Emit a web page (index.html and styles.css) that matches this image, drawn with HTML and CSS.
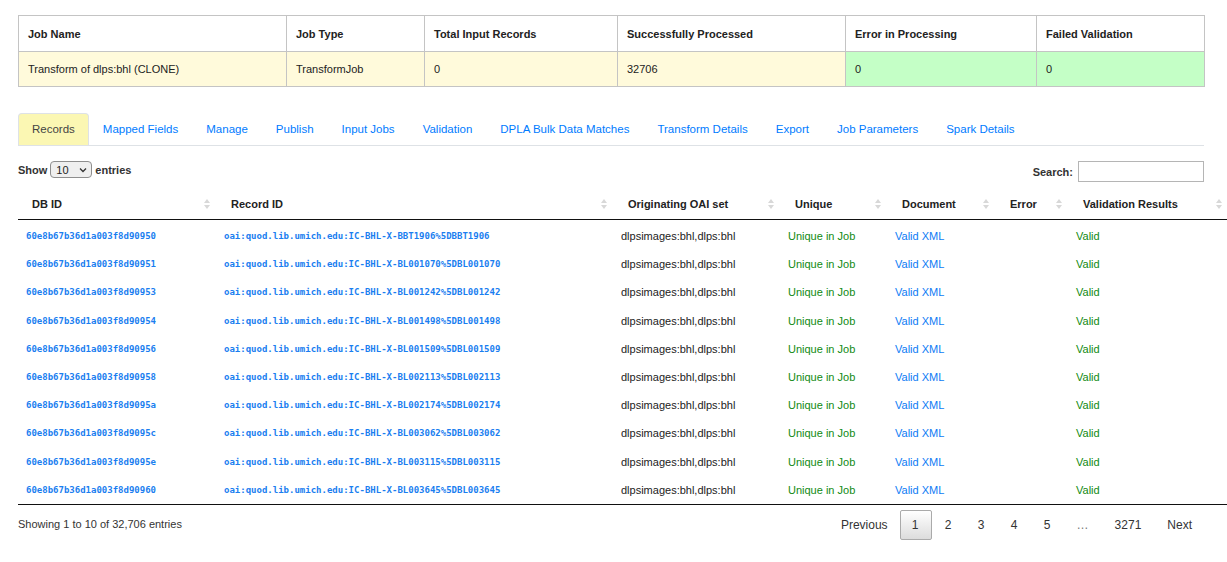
FILE: index.html
```html
<!DOCTYPE html>
<html>
<head>
<meta charset="utf-8">
<link rel="stylesheet" href="styles.css">
</head>
<body>
<div class="page">
  <table class="summary">
    <colgroup>
      <col style="width:268px"><col style="width:138px"><col style="width:193px"><col style="width:228px"><col style="width:191px"><col style="width:168px">
    </colgroup>
    <tr class="sum-head">
      <th>Job Name</th><th>Job Type</th><th>Total Input Records</th><th>Successfully Processed</th><th>Error in Processing</th><th>Failed Validation</th>
    </tr>
    <tr class="sum-data">
      <td class="warn">Transform of dlps:bhl (CLONE)</td><td class="warn">TransformJob</td><td class="warn">0</td><td class="warn">32706</td><td class="ok">0</td><td class="ok">0</td>
    </tr>
  </table>

  <ul class="tabs">
    <li class="tab active">Records</li>
    <li class="tab">Mapped Fields</li>
    <li class="tab">Manage</li>
    <li class="tab">Publish</li>
    <li class="tab">Input Jobs</li>
    <li class="tab">Validation</li>
    <li class="tab">DPLA Bulk Data Matches</li>
    <li class="tab">Transform Details</li>
    <li class="tab">Export</li>
    <li class="tab">Job Parameters</li>
    <li class="tab">Spark Details</li>
  </ul>

  <div class="dt-wrap">
    <div class="dt-top">
      <label class="len">Show <span class="sel">10<svg width="8" height="6" viewBox="0 0 8 6"><path d="M1 1.5 L4 4.5 L7 1.5" fill="none" stroke="#333" stroke-width="1.3"/></svg></span> entries</label>
      <label class="search">Search: <span class="inp"></span></label>
    </div>

    <table class="records">
      <colgroup>
        <col style="width:199px"><col style="width:397px"><col style="width:167px"><col style="width:107px"><col style="width:108px"><col style="width:73px"><col style="width:160px">
      </colgroup>
      <thead>
        <tr>
          <th><div class="th">DB ID<i class="sort"></i></div></th>
          <th><div class="th">Record ID<i class="sort"></i></div></th>
          <th><div class="th">Originating OAI set<i class="sort"></i></div></th>
          <th><div class="th">Unique<i class="sort"></i></div></th>
          <th><div class="th">Document<i class="sort"></i></div></th>
          <th><div class="th">Error<i class="sort"></i></div></th>
          <th><div class="th">Validation Results<i class="sort"></i></div></th>
        </tr>
      </thead>
      <tbody>
        <tr><td class="mono">60e8b67b36d1a003f8d90950</td><td class="mono">oai:quod.lib.umich.edu:IC-BHL-X-BBT1906%5DBBT1906</td><td>dlpsimages:bhl,dlps:bhl</td><td class="green">Unique in Job</td><td class="blue">Valid XML</td><td></td><td class="green">Valid</td></tr>
        <tr><td class="mono">60e8b67b36d1a003f8d90951</td><td class="mono">oai:quod.lib.umich.edu:IC-BHL-X-BL001070%5DBL001070</td><td>dlpsimages:bhl,dlps:bhl</td><td class="green">Unique in Job</td><td class="blue">Valid XML</td><td></td><td class="green">Valid</td></tr>
        <tr><td class="mono">60e8b67b36d1a003f8d90953</td><td class="mono">oai:quod.lib.umich.edu:IC-BHL-X-BL001242%5DBL001242</td><td>dlpsimages:bhl,dlps:bhl</td><td class="green">Unique in Job</td><td class="blue">Valid XML</td><td></td><td class="green">Valid</td></tr>
        <tr><td class="mono">60e8b67b36d1a003f8d90954</td><td class="mono">oai:quod.lib.umich.edu:IC-BHL-X-BL001498%5DBL001498</td><td>dlpsimages:bhl,dlps:bhl</td><td class="green">Unique in Job</td><td class="blue">Valid XML</td><td></td><td class="green">Valid</td></tr>
        <tr><td class="mono">60e8b67b36d1a003f8d90956</td><td class="mono">oai:quod.lib.umich.edu:IC-BHL-X-BL001509%5DBL001509</td><td>dlpsimages:bhl,dlps:bhl</td><td class="green">Unique in Job</td><td class="blue">Valid XML</td><td></td><td class="green">Valid</td></tr>
        <tr><td class="mono">60e8b67b36d1a003f8d90958</td><td class="mono">oai:quod.lib.umich.edu:IC-BHL-X-BL002113%5DBL002113</td><td>dlpsimages:bhl,dlps:bhl</td><td class="green">Unique in Job</td><td class="blue">Valid XML</td><td></td><td class="green">Valid</td></tr>
        <tr><td class="mono">60e8b67b36d1a003f8d9095a</td><td class="mono">oai:quod.lib.umich.edu:IC-BHL-X-BL002174%5DBL002174</td><td>dlpsimages:bhl,dlps:bhl</td><td class="green">Unique in Job</td><td class="blue">Valid XML</td><td></td><td class="green">Valid</td></tr>
        <tr><td class="mono">60e8b67b36d1a003f8d9095c</td><td class="mono">oai:quod.lib.umich.edu:IC-BHL-X-BL003062%5DBL003062</td><td>dlpsimages:bhl,dlps:bhl</td><td class="green">Unique in Job</td><td class="blue">Valid XML</td><td></td><td class="green">Valid</td></tr>
        <tr><td class="mono">60e8b67b36d1a003f8d9095e</td><td class="mono">oai:quod.lib.umich.edu:IC-BHL-X-BL003115%5DBL003115</td><td>dlpsimages:bhl,dlps:bhl</td><td class="green">Unique in Job</td><td class="blue">Valid XML</td><td></td><td class="green">Valid</td></tr>
        <tr><td class="mono">60e8b67b36d1a003f8d90960</td><td class="mono">oai:quod.lib.umich.edu:IC-BHL-X-BL003645%5DBL003645</td><td>dlpsimages:bhl,dlps:bhl</td><td class="green">Unique in Job</td><td class="blue">Valid XML</td><td></td><td class="green">Valid</td></tr>
      </tbody>
    </table>

    <div class="dt-bottom">
      <div class="info">Showing 1 to 10 of 32,706 entries</div>
      <div class="paging">
        <span class="pbtn">Previous</span>
        <span class="pbtn current">1</span>
        <span class="pbtn">2</span>
        <span class="pbtn">3</span>
        <span class="pbtn">4</span>
        <span class="pbtn">5</span>
        <span class="pbtn ell">…</span>
        <span class="pbtn">3271</span>
        <span class="pbtn">Next</span>
      </div>
    </div>
  </div>
</div>
</body>
</html>
```

FILE: styles.css
```css
html, body {
  margin: 0;
  padding: 0;
  background: #fff;
  overflow-x: hidden;
}
body {
  font-family: "Liberation Sans", Arial, sans-serif;
  color: #212529;
}
.page {
  padding: 15px 23px 0 18px;
  width: 1186px;
}

/* summary table */
.summary {
  border-collapse: collapse;
  width: 1186px;
  table-layout: fixed;
  font-size: 11px;
}
.summary th, .summary td {
  border: 1px solid #c4c4c4;
  text-align: left;
  padding: 0 9px;
}
.summary th {
  height: 35px;
  font-weight: bold;
  color: #222;
}
.summary td {
  height: 34px;
  color: #222;
}
.summary td.warn { background: #fffadb; }
.summary td.ok { background: #c4ffc6; }

/* tabs */
.tabs {
  list-style: none;
  margin: 26px 0 0 0;
  padding: 0;
  display: flex;
  border-bottom: 1px solid #dee2e6;
  font-size: 11.5px;
}
.tab {
  padding: 0 13px;
  height: 31px;
  line-height: 31px;
  color: #007bff;
  border: 1px solid transparent;
  border-bottom: none;
}
.tab.active {
  background: #fbf7b3;
  color: #444;
  border-color: #dee2e6;
  border-radius: 4px 4px 0 0;
}

/* datatable */
.dt-wrap {
  margin-top: 13px;
}
.dt-top {
  display: flex;
  justify-content: space-between;
  align-items: center;
  font-size: 11px;
  font-weight: bold;
  color: #333;
}
.len {
  display: flex;
  align-items: center;
  gap: 3px;
  margin-top: -2px;
}
.sel {
  display: inline-flex;
  align-items: center;
  justify-content: space-between;
  height: 17px;
  padding: 0 4px 0 5px;
  box-sizing: border-box;
  width: 42px;
  border: 1px solid #8e8e8e;
  border-radius: 4px;
  background: #efefef;
  font-weight: normal;
  font-size: 11px;
  color: #222;
}
.search {
  display: flex;
  align-items: center;
  gap: 5px;
  margin-top: 2px;
}
.inp {
  display: inline-block;
  width: 124px;
  height: 19px;
  border: 1px solid #b5b5b5;
  background: #fff;
}

.records {
  border-collapse: collapse;
  table-layout: fixed;
  width: 1211px;
  margin-top: 6px;
  font-size: 11px;
}
.records thead th {
  border-bottom: 1px solid #111;
  padding: 0 0 0 14px;
  height: 31px;
  text-align: left;
  font-weight: bold;
  color: #222;
}
.th {
  display: flex;
  justify-content: space-between;
  align-items: center;
  padding-right: 6px;
}
.sort {
  display: inline-flex;
  flex-direction: column;
  gap: 2px;
  width: 7px;
}
.sort::before, .sort::after {
  content: "";
  display: block;
  width: 0;
  height: 0;
  border-left: 3.5px solid transparent;
  border-right: 3.5px solid transparent;
}
.sort::before { border-bottom: 4px solid #d8d8d8; }
.sort::after { border-top: 4px solid #d8d8d8; }

.records tbody td {
  height: 28.2px;
  padding: 0 0 0 7px;
  color: #222;
  white-space: nowrap;
  vertical-align: middle;
}
.records tbody tr:first-child td { padding-top: 2px; }
.records tbody tr:last-child td { border-bottom: 1px solid #111; }
.records td.mono {
  font-family: "DejaVu Sans Mono", monospace;
  font-size: 9px;
  font-weight: bold;
  color: #1a7ef0;
}
.records td:first-child { padding-left: 8px; }
.records td.green { color: #118a11; }
.records td.blue { color: #0d7bf5; }

.dt-bottom {
  display: flex;
  justify-content: space-between;
  align-items: center;
  margin-top: 5px;
  font-size: 11px;
  color: #333;
}
.info {
  margin-top: -2px;
}
.paging {
  display: flex;
  align-items: center;
  font-size: 12px;
  color: #333;
  margin-right: -1px;
}
.pbtn {
  padding: 7px 12px;
  border: 1px solid transparent;
  border-radius: 2px;
  min-width: 7px;
  text-align: center;
  line-height: 14px;
}
.pbtn:first-child { padding-right: 11px; }
.pbtn.current {
  border-color: #aaa;
  background: linear-gradient(to bottom, #fff 0%, #dcdcdc 100%);
  padding: 7px 12px 7px 11px;
}
.pbtn.ell {
  color: #777;
}
```
